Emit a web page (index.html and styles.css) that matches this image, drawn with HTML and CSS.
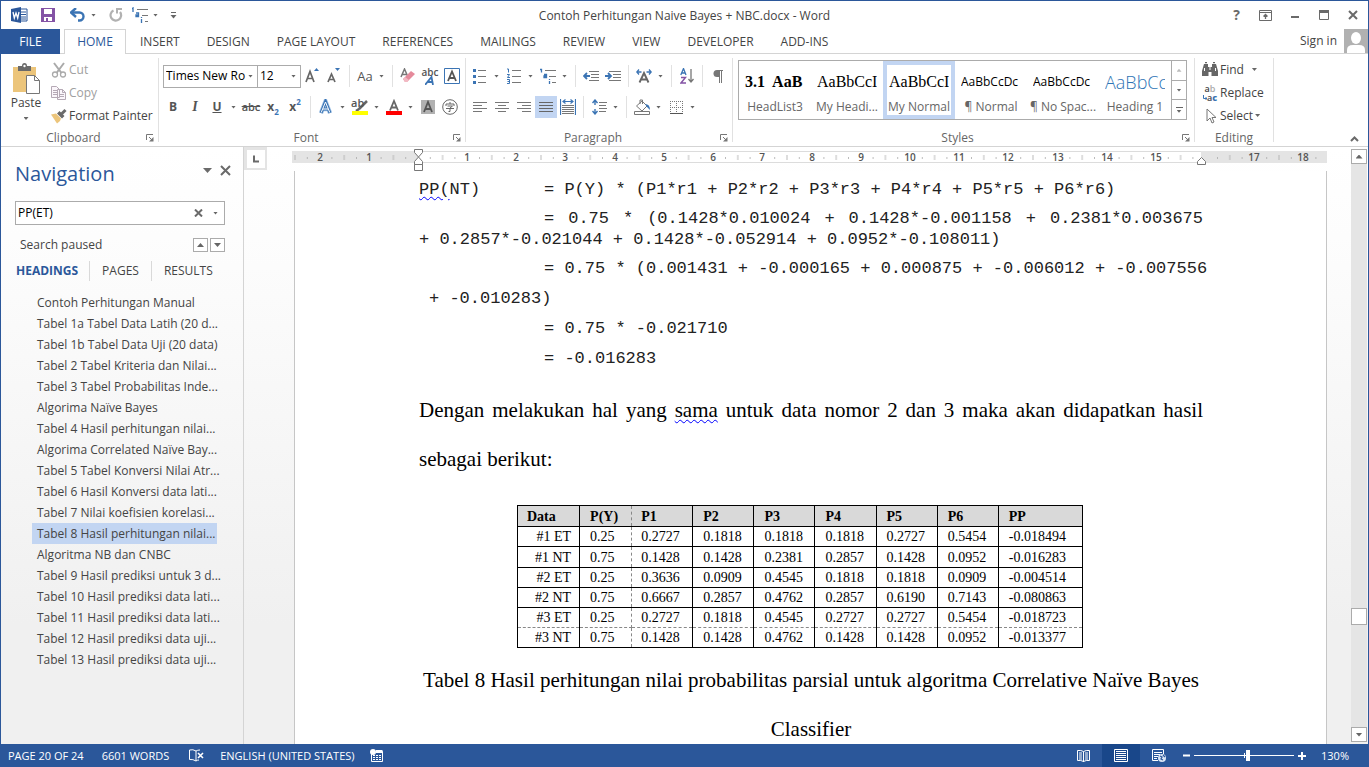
FILE: index.html
```html
<!DOCTYPE html>
<html lang="id">
<head>
<meta charset="utf-8">
<title>Contoh Perhitungan Naive Bayes + NBC.docx - Word</title>
<link rel="stylesheet" href="styles.css">
</head>
<body>
<div class="window">
  <header class="titlebar">
    <div class="quick">
      <svg class="app-logo" width="17" height="16" viewBox="0 0 17 16"><path d="M9 2h7v12H9z" fill="#fff" stroke="#2b579a"/><path d="M10 5h5M10 7.500h5M10 10h5M10 12h5" stroke="#2b579a"/><path d="M0 2L10 0v16L0 14z" fill="#2b579a"/><path d="M2 5l1.300 6L5 6l1.700 5L8 5" fill="none" stroke="#fff" stroke-width="1.300"/></svg>
      <button class="icon-btn" aria-label="Save"><svg width="14" height="14" viewBox="0 0 14 14"><path d="M0 0h14v14H0z" fill="#8453a5"/><path d="M3 1h8v5H3zM3 9h8v4H3z" fill="#fff"/><path d="M5 10h2v3H5z" fill="#8453a5"/></svg></button>
      <button class="icon-btn undo" aria-label="Undo"><svg width="16" height="14" viewBox="0 0 16 14"><path d="M2 4.500h7.500a4 4 0 0 1 0 8H8" fill="none" stroke="#3b74b4" stroke-width="2.400"/><path d="M6 0L1 4.500 6 9" fill="none" stroke="#3b74b4" stroke-width="2.400"/></svg><i class="arrow"></i></button>
      <button class="icon-btn" aria-label="Repeat"><svg width="14" height="14" viewBox="0 0 14 14"><path d="M4.500 2.500A5.300 5.300 0 1 0 11 4" fill="none" stroke="#b1b1b1" stroke-width="2.200"/><path d="M8 0v5.500M7 1h6" fill="none" stroke="#b1b1b1" stroke-width="2"/></svg></button>
      <button class="icon-btn list" aria-label="Multilevel list"><svg width="17" height="16" viewBox="0 0 17 16"><path d="M0 2l1-1v4M4 6h2.500v3.500H4V8h2M9.500 10v1M9.500 12v4" fill="none" stroke="#3b74b4" stroke-width="1.300"/><path d="M5 2.500h11M10 8.500h6M13 14.500h3" stroke="#777"/></svg><i class="arrow"></i></button>
      <button class="icon-btn more" aria-label="Customize toolbar"><svg width="7" height="7" viewBox="0 0 7 7"><path d="M1 0.500h5" stroke="#666"/><path d="M0.500 3h6l-3 3.500z" fill="#666"/></svg></button>
    </div>
    <div class="doc-name">Contoh Perhitungan Naive Bayes + NBC.docx - Word</div>
    <div class="win-btns">
      <button aria-label="Help" class="help">?</button>
      <button aria-label="Ribbon display options"><svg width="13" height="11" viewBox="0 0 13 11"><path d="M0.500 0.500h12v10H0.500zM0.500 2.500h12" fill="none" stroke="#6a6a6a"/><path d="M6.500 9V4.500M4.500 6.500l2-2 2 2" fill="none" stroke="#6a6a6a" stroke-width="1.300"/></svg></button>
      <button aria-label="Minimize"><svg width="10" height="10" viewBox="0 0 10 10"><path d="M1 7h8" stroke="#6a6a6a" stroke-width="2"/></svg></button>
      <button aria-label="Maximize"><svg width="10" height="10" viewBox="0 0 10 10"><path d="M0.500 1h9v8.500h-9z" fill="none" stroke="#6a6a6a"/><path d="M0 1.500h10" stroke="#6a6a6a" stroke-width="3"/></svg></button>
      <button aria-label="Close"><svg width="10" height="10" viewBox="0 0 10 10"><path d="M1 1l8 8M9 1L1 9" stroke="#6a6a6a" stroke-width="2"/></svg></button>
    </div>
  </header>

  <nav class="tabs" aria-label="Ribbon tabs">
    <button class="tab file">FILE</button>
    <button class="tab home">HOME</button>
    <button class="tab">INSERT</button>
    <button class="tab">DESIGN</button>
    <button class="tab">PAGE LAYOUT</button>
    <button class="tab">REFERENCES</button>
    <button class="tab">MAILINGS</button>
    <button class="tab">REVIEW</button>
    <button class="tab">VIEW</button>
    <button class="tab">DEVELOPER</button>
    <button class="tab">ADD-INS</button>
    <a class="signin" href="#">Sign in <svg width="24" height="24" viewBox="0 0 24 24"><path d="M0 0h24v24H0z" fill="#b1b1b1"/><ellipse cx="12" cy="9" rx="5" ry="6" fill="#fff"/><path d="M3 24v-3q0-5 6-5h6q6 0 6 5v3z" fill="#fff"/></svg></a>
  </nav>

  <section class="ribbon">
    <div class="group clipboard">
      <div class="group-body">
        <button class="paste"><svg width="29" height="31" viewBox="0 0 29 31"><path d="M1 4h23v25H1z" fill="#ecc57b"/><path d="M6 3h4q0-3 2.500-3T15 3h4v5H6z" fill="#6a6a6a"/><circle cx="12.500" cy="3" r="1.200" fill="#fff"/><path d="M14.500 12.500h8l5 5v13h-13z" fill="#fff" stroke="#777"/><path d="M22.500 12.500v5h5" fill="none" stroke="#777"/></svg><span>Paste</span><i class="arrow"></i></button>
        <div class="clip-list">
          <button class="line off"><svg width="16" height="16" viewBox="0 0 16 16"><path d="M3 1l7.500 10M13 1L5.500 11" stroke="#aaa" stroke-width="2"/><circle cx="4" cy="12.500" r="2.500" fill="none" stroke="#aaa" stroke-width="1.300"/><circle cx="12" cy="12.500" r="2.500" fill="none" stroke="#aaa" stroke-width="1.300"/></svg>Cut</button>
          <button class="line off"><svg width="16" height="16" viewBox="0 0 16 16"><path d="M0.500 1.500h5l3 3v8h-8zM6.500 4.500h5l3 3v7h-8z" fill="#fbf6fb" stroke="#b5a9b5"/><path d="M2 5.500h4M2 7.500h4M2 9.500h4M8 9.500h5M8 11.500h5M11.500 4.500v3h3" fill="none" stroke="#b5a9b5"/></svg>Copy</button>
          <button class="line"><svg width="16" height="16" viewBox="0 0 16 16"><path d="M0 6.500l5-1 5 5-1 2.500-3 2.500z" fill="#ecc57b"/><path d="M6 5.500l2.500-2.500 5 5-2.500 2.500zM8 3L6 1.500" fill="#6a6a6a"/><path d="M10.500 6l4-4" stroke="#6a6a6a" stroke-width="3"/></svg>Format Painter</button>
        </div>
      </div>
      <div class="group-name"><span>Clipboard</span><button class="launch" aria-label="Clipboard settings"><svg width="8" height="8" viewBox="0 0 8 8"><path d="M0.500 6V0.500H7M3 3l3 3" fill="none" stroke="#777"/><path d="M7.500 3v4.500H3z" fill="#777"/></svg></button></div>
    </div>

    <div class="group font">
      <div class="group-body rows">
        <div class="row">
          <label class="combo family"><select aria-label="Font"><option>Times New Ro</option></select></label>
          <label class="combo size"><select aria-label="Font size"><option>12</option></select></label>
          <button class="tool" aria-label="Grow font"><svg width="16" height="16" viewBox="0 0 16 16"><path d="M2 14L6 3.500 10 14M3.500 10.500h5" fill="none" stroke="#666" stroke-width="1.700"/><path d="M10 3l2.500-3L15 3z" fill="#3b74b4"/></svg></button>
          <button class="tool" aria-label="Shrink font"><svg width="16" height="16" viewBox="0 0 16 16"><path d="M2 14L5.500 6 9 14M3 11.500h5" fill="none" stroke="#666" stroke-width="1.700"/><path d="M9 0l2.500 3L14 0z" fill="#3b74b4"/></svg></button>
          <i class="sep"></i>
          <button class="tool case" aria-label="Change case">Aa</button><i class="arrow drop"></i>
          <i class="sep"></i>
          <button class="tool" aria-label="Clear formatting"><svg width="16" height="16" viewBox="0 0 16 16"><path d="M1 9L4.500 1 8 9M2.500 6.500h4" fill="none" stroke="#777" stroke-width="1.500"/><path d="M3 11l8-8 4 3-8 8H5z" fill="#e58a9b"/><path d="M3 11l2-2 4 3-2 2H5z" fill="#f2b9c3"/></svg></button>
          <button class="tool effects" aria-label="Phonetic guide"><span>abc</span><svg width="10" height="9" viewBox="0 0 10 9"><path d="M0 9L6.500 1 8 9M3 6h5" fill="none" stroke="#3b74b4" stroke-width="1.800"/></svg></button>
          <button class="tool" aria-label="Character border"><svg width="16" height="16" viewBox="0 0 16 16"><path d="M0.500 0.500h15v15H0.500z" fill="#fff" stroke="#3b74b4"/><path d="M4 13L8 3.500 12 13M5.500 10h5" fill="none" stroke="#555" stroke-width="1.800"/></svg></button>
        </div>
        <div class="row">
          <button class="tool b">B</button>
          <button class="tool i">I</button>
          <button class="tool u">U</button><i class="arrow drop"></i>
          <button class="tool strike">abc</button>
          <button class="tool b">x<sub>2</sub></button>
          <button class="tool b">x<sup>2</sup></button>
          <i class="sep"></i>
          <button class="tool" aria-label="Text effects"><svg width="16" height="16" viewBox="0 0 16 16"><path d="M3 14L7.500 2.500 12 14M4.500 10h6" fill="none" stroke="#a9c8e8" stroke-width="4.500"/><path d="M3 14L7.500 2.500 12 14M4.500 10h6" fill="none" stroke="#3b74b4" stroke-width="3"/><path d="M3.200 13.500L7.500 3l4.300 10.500M5 10h5" fill="none" stroke="#fff"/></svg></button><i class="arrow drop"></i>
          <button class="tool mark" aria-label="Highlight color"><span>ab</span><svg width="17" height="16" viewBox="0 0 17 16"><path d="M7 10l8-8M7 10l-3 2" stroke="#666" stroke-width="2.500"/><path d="M0 12h16v4H0z" fill="#ff0"/></svg></button><i class="arrow drop"></i>
          <button class="tool" aria-label="Font color"><svg width="16" height="16" viewBox="0 0 16 16"><path d="M4 11.500L8 2l4 9.500M5.500 8.500h5" fill="none" stroke="#666" stroke-width="1.800"/><path d="M0 12h16v4H0z" fill="red"/></svg></button><i class="arrow drop"></i>
          <button class="tool" aria-label="Character shading"><svg width="14" height="14" viewBox="0 0 14 14"><path d="M0 0h14v14H0z" fill="#b1b1b1"/><path d="M3 12L7 2l4 10M4.500 9h5" fill="none" stroke="#555" stroke-width="1.800"/></svg></button>
          <button class="tool" aria-label="Enclose characters"><svg width="16" height="16" viewBox="0 0 16 16"><circle cx="8" cy="8" r="7.300" fill="none" stroke="#666"/><path d="M8 3v2M4 7V5h8v2M5.500 7h5L8 9v3.500H6.500M4 9.500h8" fill="none" stroke="#666"/></svg></button>
        </div>
      </div>
      <div class="group-name"><span>Font</span><button class="launch" aria-label="Font settings"><svg width="8" height="8" viewBox="0 0 8 8"><path d="M0.500 6V0.500H7M3 3l3 3" fill="none" stroke="#777"/><path d="M7.500 3v4.500H3z" fill="#777"/></svg></button></div>
    </div>

    <div class="group paragraph">
      <div class="group-body rows">
        <div class="row">
          <button class="tool" aria-label="Bullets"><svg width="14" height="16" viewBox="0 0 14 16"><path d="M0 1h3v3H0zM0 7h3v3H0zM0 13h3v3H0z" fill="#3b74b4"/><path d="M5 2.500h8M5 8.500h8M5 14.500h8" stroke="#777"/></svg></button><i class="arrow drop"></i>
          <button class="tool" aria-label="Numbering"><svg width="14" height="16" viewBox="0 0 14 16"><path d="M0 1h1.500v3.500M0 6.500h2.500L0.500 9.500h2.500M0 11.500h2.500v4H0M0.500 13.500h2" fill="none" stroke="#3b74b4"/><path d="M5 2.500h9M5 8.500h9M5 14.500h9" stroke="#777"/></svg></button><i class="arrow drop"></i>
          <button class="tool" aria-label="Multilevel list"><svg width="17" height="16" viewBox="0 0 17 16"><path d="M0 1.500h1.500v3M4 6.500h2.500v3H4V8h2M9.500 11v1M9.500 13v3" fill="none" stroke="#3b74b4" stroke-width="1.300"/><path d="M5 2.500h11M9 8.500h7M12 14.500h4" stroke="#777"/></svg></button><i class="arrow drop"></i>
          <i class="sep"></i>
          <button class="tool" aria-label="Decrease indent"><svg width="16" height="12" viewBox="0 0 16 12"><path d="M6 1.500h10M8 4.500h8M8 7.500h8M6 10.500h10" stroke="#777"/><path d="M7 6H1M4 3L1 6l3 3" fill="none" stroke="#3b74b4" stroke-width="1.800"/></svg></button>
          <button class="tool" aria-label="Increase indent"><svg width="16" height="12" viewBox="0 0 16 12"><path d="M4 1.500h12M8 4.500h8M8 7.500h8M4 10.500h12" stroke="#777"/><path d="M0 6h6M3 3l3 3-3 3" fill="none" stroke="#3b74b4" stroke-width="1.800"/></svg></button>
          <i class="sep"></i>
          <button class="tool" aria-label="Asian layout"><svg width="16" height="14" viewBox="0 0 16 14"><path d="M3.500 13.500L8 4l4.500 9.500M5 10.500h6" fill="none" stroke="#666" stroke-width="1.900"/><path d="M5.500 3H1M3 0.500L0.800 3 3 5.500M10.500 3H15M13 0.500L15.200 3 13 5.500" fill="none" stroke="#3b74b4" stroke-width="1.300"/></svg></button><i class="arrow drop"></i>
          <i class="sep"></i>
          <button class="tool" aria-label="Sort"><svg width="14" height="16" viewBox="0 0 14 16"><path d="M0.800 7L3.500 0.500 6 7M1.500 5h4" fill="none" stroke="#3b74b4" stroke-width="1.300"/><path d="M1 9.500h4.500L1 15h5" fill="none" stroke="#8453a5" stroke-width="1.400"/><path d="M11 1v13M8.500 11l2.500 3 2.500-3" fill="none" stroke="#777" stroke-width="1.300"/></svg></button>
          <i class="sep"></i>
          <button class="tool" aria-label="Show marks"><svg width="11" height="13" viewBox="0 0 11 13"><path d="M5 0.500h5M6.500 1v12M8.500 1v12" stroke="#777"/><path d="M6.500 0H4a3.500 3.500 0 0 0 0 7h2.500z" fill="#777"/></svg></button>
        </div>
        <div class="row">
          <button class="tool" aria-label="Align left"><svg width="14" height="12" viewBox="0 0 14 12"><path d="M0 1.500h14M0 4.500h9M0 7.500h14M0 10.500h9" stroke="#777"/></svg></button>
          <button class="tool" aria-label="Center"><svg width="14" height="12" viewBox="0 0 14 12"><path d="M0 1.500h14M3 4.500h8M0 7.500h14M3 10.500h8" stroke="#777"/></svg></button>
          <button class="tool" aria-label="Align right"><svg width="14" height="12" viewBox="0 0 14 12"><path d="M0 1.500h14M5 4.500h9M0 7.500h14M5 10.500h9" stroke="#777"/></svg></button>
          <button class="tool on" aria-label="Justify"><svg width="14" height="12" viewBox="0 0 14 12"><path d="M0 1.500h14M0 4.500h14M0 7.500h14M0 10.500h14" stroke="#666"/></svg></button>
          <button class="tool" aria-label="Distribute"><svg width="16" height="16" viewBox="0 0 16 16"><path d="M0.500 0v16M15.500 0v16M3 2.500h10M5.500 0.500L3 2.500l2.500 2M10.500 0.500l2.500 2-2.500 2" fill="none" stroke="#3b74b4" stroke-width="1.200"/><path d="M2 6.500h12M2 8.500h12M2 10.500h12M2 12.500h12M2 14.500h12" stroke="#777"/></svg></button>
          <i class="sep"></i>
          <button class="tool" aria-label="Line spacing"><svg width="15" height="16" viewBox="0 0 15 16"><path d="M3 1v5M3 10v5M0.500 4L3 1l2.500 3M0.500 12L3 15l2.500-3" fill="none" stroke="#3b74b4" stroke-width="1.400"/><path d="M7 3.500h8M7 6.500h7M7 9.500h8M7 12.500h7" stroke="#777"/></svg></button><i class="arrow drop"></i>
          <i class="sep"></i>
          <button class="tool" aria-label="Shading"><svg width="17" height="16" viewBox="0 0 17 16"><path d="M2.500 7L8 2l5 5-5 5z" fill="#fff" stroke="#777"/><path d="M6 5V1h2.500v4" fill="none" stroke="#777"/><path d="M11 5q5 0 5 6l-3-3z" fill="#3b74b4"/><path d="M0.500 12.500h15v3H0.500z" fill="#fff" stroke="#777"/></svg></button><i class="arrow drop"></i>
          <button class="tool" aria-label="Borders"><svg width="13" height="13" viewBox="0 0 13 13"><path d="M0 0.500h13M0 6.500h13M0.500 0v13M6.500 0v13M12.500 0v13" fill="none" stroke="#777" stroke-dasharray="1 1"/><path d="M0 12.500h13" stroke="#555"/></svg></button><i class="arrow drop"></i>
        </div>
      </div>
      <div class="group-name"><span>Paragraph</span><button class="launch" aria-label="Paragraph settings"><svg width="8" height="8" viewBox="0 0 8 8"><path d="M0.500 6V0.500H7M3 3l3 3" fill="none" stroke="#777"/><path d="M7.500 3v4.500H3z" fill="#777"/></svg></button></div>
    </div>

    <div class="group styles">
      <div class="group-body">
        <div class="gallery">
          <button class="style"><b class="sample serif">3.1&nbsp; AaB</b><span>HeadList3</span></button>
          <button class="style"><span class="sample serif">AaBbCcI</span><span>My Headi...</span></button>
          <button class="style chosen"><span class="sample serif">AaBbCcI</span><span>My Normal</span></button>
          <button class="style"><span class="sample sans">AaBbCcDc</span><span>¶ Normal</span></button>
          <button class="style"><span class="sample sans">AaBbCcDc</span><span>¶ No Spac...</span></button>
          <button class="style"><span class="sample big">AaBbCc</span><span>Heading 1</span></button>
          <div class="gallery-nav">
            <button aria-label="Previous styles" disabled><i class="arrow up pale"></i></button>
            <button aria-label="Next styles"><i class="arrow"></i></button>
            <button aria-label="All styles" class="all"><i class="arrow"></i></button>
          </div>
        </div>
      </div>
      <div class="group-name"><span>Styles</span><button class="launch" aria-label="Styles settings"><svg width="8" height="8" viewBox="0 0 8 8"><path d="M0.500 6V0.500H7M3 3l3 3" fill="none" stroke="#777"/><path d="M7.500 3v4.500H3z" fill="#777"/></svg></button></div>
    </div>

    <div class="group editing">
      <div class="group-body">
        <button class="line"><svg width="16" height="16" viewBox="0 0 16 16"><path d="M2 2h4v3h4V2h4l2 7v5H9.500v-4h-3v4H0V9z" fill="#666"/><path d="M3 0.500h2M11 0.500h2" stroke="#666" stroke-width="1.500"/><path d="M2.500 6v3M13.500 6v3M8 5v3" stroke="#fff"/></svg><span class="find">Find</span><i class="arrow"></i></button>
        <button class="line"><span class="swap"><span>a<em>b</em></span><span class="to"><svg width="4" height="5" viewBox="0 0 4 5"><path d="M0.500 0v3.500H4M2.500 2L4 3.500 2.500 5" fill="none" stroke="#3b74b4"/></svg>a<b>c</b></span></span>Replace</button>
        <button class="line"><svg width="16" height="16" viewBox="0 0 16 16"><path d="M5 1v12l3-3 2 5 2-1-2-4.500h4z" fill="#fff" stroke="#777"/></svg><span>Select</span><i class="arrow"></i></button>
      </div>
      <div class="group-name"><span>Editing</span></div>
    </div>
    <button class="collapse" aria-label="Collapse ribbon"><svg width="9" height="6" viewBox="0 0 9 6"><path d="M1 5l3.500-3.500L8 5" fill="none" stroke="#6a6a6a" stroke-width="2"/></svg></button>
  </section>

  <main class="work">
    <aside class="navpane">
      <div class="nav-head"><h2>Navigation</h2>
        <button aria-label="Pane options"><svg width="10" height="5" viewBox="0 0 10 5"><path d="M0 0h9L4.500 5z" fill="#6a6a6a"/></svg></button>
        <button aria-label="Close pane"><svg width="11" height="11" viewBox="0 0 11 11"><path d="M1 1l9 9M10 1l-9 9" stroke="#6a6a6a" stroke-width="2"/></svg></button></div>
      <div class="search"><input type="text" value="PP(ET)" aria-label="Search document"><button aria-label="Clear search"><svg width="9" height="8" viewBox="0 0 9 8"><path d="M1 0.500l7 7M8 0.500l-7 7" stroke="#6a6a6a" stroke-width="2"/></svg></button><button aria-label="Search options"><i class="arrow"></i></button></div>
      <div class="status"><span>Search paused</span><button aria-label="Previous result"><i class="arrow up wide"></i></button><button aria-label="Next result"><i class="arrow wide"></i></button></div>
      <div class="views"><button class="current">HEADINGS</button><button>PAGES</button><button>RESULTS</button></div>
      <ul class="headings">
        <li><a href="#">Contoh Perhitungan Manual</a></li>
        <li><a href="#">Tabel 1a Tabel Data Latih (20 d...</a></li>
        <li><a href="#">Tabel 1b Tabel Data Uji (20 data)</a></li>
        <li><a href="#">Tabel 2 Tabel Kriteria dan Nilai...</a></li>
        <li><a href="#">Tabel 3 Tabel Probabilitas Inde...</a></li>
        <li><a href="#">Algorima Naïve Bayes</a></li>
        <li><a href="#">Tabel 4 Hasil perhitungan nilai...</a></li>
        <li><a href="#">Algorima Correlated Naïve Bay...</a></li>
        <li><a href="#">Tabel 5 Tabel Konversi Nilai Atr...</a></li>
        <li><a href="#">Tabel 6 Hasil Konversi data lati...</a></li>
        <li><a href="#">Tabel 7 Nilai koefisien korelasi...</a></li>
        <li><a href="#" class="active">Tabel 8 Hasil perhitungan nilai...</a></li>
        <li><a href="#">Algoritma NB dan CNBC</a></li>
        <li><a href="#">Tabel 9 Hasil prediksi untuk 3 d...</a></li>
        <li><a href="#">Tabel 10 Hasil prediksi data lati...</a></li>
        <li><a href="#">Tabel 11 Hasil prediksi data lati...</a></li>
        <li><a href="#">Tabel 12 Hasil prediksi data uji...</a></li>
        <li><a href="#">Tabel 13 Hasil prediksi data uji...</a></li>
      </ul>
    </aside>

    <section class="doc">
      <div class="ruler-row">
        <button class="tabstop" aria-label="Tab stop"><svg width="18" height="18" viewBox="0 0 18 18"><path d="M0 0h18v18H0z" fill="#fff"/><path d="M7 5.500v6h5" fill="none" stroke="#6a6a6a" stroke-width="2"/></svg></button>
        <svg class="ruler" width="1035" height="24" viewBox="0 0 1035 24">
          <defs><pattern id="ticks" x="126" y="0" width="49.200" height="24" patternUnits="userSpaceOnUse"><path d="M12.300 10v2M36.900 10v2M24.600 8v5" stroke="#aaa" stroke-width="0.800"/></pattern></defs>
          <path d="M0 4h1035v12H0z" fill="#e4e4e4"/><path d="M126 5h783v10H126z" fill="#fff"/><path d="M126 4.500h783M126 15.500h783" stroke="#dcdcdc"/>
          <path d="M0 0h1035v24H0z" fill="url(#ticks)"/>
          <g class="ruler-nums"><text x="28" y="14">2</text><text x="77" y="14">1</text><text x="175" y="14">1</text><text x="224" y="14">2</text><text x="273" y="14">3</text><text x="323" y="14">4</text><text x="372" y="14">5</text><text x="421" y="14">6</text><text x="470" y="14">7</text><text x="520" y="14">8</text><text x="569" y="14">9</text><text x="618" y="14">10</text><text x="667" y="14">11</text><text x="716" y="14">12</text><text x="766" y="14">13</text><text x="815" y="14">14</text><text x="864" y="14">15</text><text x="962" y="14">17</text><text x="1011" y="14">18</text></g>
          <path d="M122.500 2.500h8v3l-4 4.500-4-4.500zM122.500 17.500v-3l4-4.500 4 4.500v3zM122.500 17.500h8v6h-8zM905.500 17.500v-3l4-4 4 4v3z" fill="#fff" stroke="#777"/>
        </svg>
      </div>
      <article class="page">
        <div class="math">
          <p><span class="lead"><span class="spell">PP(</span>NT)</span><span>= P(Y) * (P1*r1 + P2*r2 + P3*r3 + P4*r4 + P5*r5 + P6*r6)</span></p>
          <p class="tight"><span class="lead"></span><span class="full">= 0.75 * (0.1428*0.010024 + 0.1428*-0.001158 + 0.2381*0.003675</span></p>
          <p class="short">+ 0.2857*-0.021044 + 0.1428*-0.052914 + 0.0952*-0.108011)</p>
          <p><span class="lead"></span><span>= 0.75 * (0.001431 + -0.000165 + 0.000875 + -0.006012 + -0.007556</span></p>
          <p class="hang">+ -0.010283)</p>
          <p><span class="lead"></span><span>= 0.75 * -0.021710</span></p>
          <p><span class="lead"></span><span>= -0.016283</span></p>
        </div>
        <p class="body"><span class="full">Dengan melakukan hal yang <span class="spell">sama</span> untuk data nomor 2 dan 3 maka akan didapatkan hasil</span> sebagai berikut:</p>
        <table class="results">
          <thead><tr><th>Data</th><th>P(Y)</th><th>P1</th><th>P2</th><th>P3</th><th>P4</th><th>P5</th><th>P6</th><th>PP</th></tr></thead>
          <tbody>
            <tr><td>#1 ET</td><td>0.25</td><td>0.2727</td><td>0.1818</td><td>0.1818</td><td>0.1818</td><td>0.2727</td><td>0.5454</td><td>-0.018494</td></tr>
            <tr><td>#1 NT</td><td>0.75</td><td>0.1428</td><td>0.1428</td><td>0.2381</td><td>0.2857</td><td>0.1428</td><td>0.0952</td><td>-0.016283</td></tr>
            <tr><td>#2 ET</td><td>0.25</td><td>0.3636</td><td>0.0909</td><td>0.4545</td><td>0.1818</td><td>0.1818</td><td>0.0909</td><td>-0.004514</td></tr>
            <tr><td>#2 NT</td><td>0.75</td><td>0.6667</td><td>0.2857</td><td>0.4762</td><td>0.2857</td><td>0.6190</td><td>0.7143</td><td>-0.080863</td></tr>
            <tr><td>#3 ET</td><td>0.25</td><td>0.2727</td><td>0.1818</td><td>0.4545</td><td>0.2727</td><td>0.2727</td><td>0.5454</td><td>-0.018723</td></tr>
            <tr><td>#3 NT</td><td>0.75</td><td>0.1428</td><td>0.1428</td><td>0.4762</td><td>0.1428</td><td>0.1428</td><td>0.0952</td><td>-0.013377</td></tr>
          </tbody>
        </table>
        <p class="caption">Tabel 8 Hasil perhitungan nilai probabilitas parsial untuk algoritma Correlative Naïve Bayes Classifier</p>
      </article>
    </section>

    <div class="scroll">
      <button aria-label="Scroll up"><i class="arrow up wide"></i></button>
      <div class="track"><div class="thumb"></div></div>
      <button aria-label="Scroll down"><i class="arrow wide"></i></button>
    </div>
  </main>

  <footer class="statusbar">
    <button class="pages">PAGE 20 OF 24</button>
    <button class="words">6601 WORDS</button>
    <button class="proof" aria-label="Proofing"><svg width="15" height="13" viewBox="0 0 15 13"><path d="M7 2q-3-2-6.500-1v9.500Q4 10 7 12q1-1 3-1M7 2v10M7 2q1.500-1 4-1" fill="none" stroke="#fff"/><path d="M9 4l5 5M14 4L9 9" stroke="#fff" stroke-width="1.600"/></svg></button>
    <button class="lang">ENGLISH (UNITED STATES)</button>
    <button aria-label="Macros"><svg width="13" height="13" viewBox="0 0 13 13"><path d="M1.500 5v7.500h11v-10H6" fill="none" stroke="#fff"/><circle cx="3" cy="3" r="3" fill="#fff"/><path d="M6 2.500h6.500" stroke="#fff" stroke-width="3"/><path d="M3 6.500h9M3 8.500h9M3 10.500h9" stroke="#fff" stroke-dasharray="2 1"/></svg></button>
    <div class="view-tools">
      <button aria-label="Read mode"><svg width="13" height="12" viewBox="0 0 13 12"><path d="M6.500 1.500Q4 0 0.500 0.500v10q3.500-.500 6 1 2.500-1.500 6-1v-10Q9 0 6.500 1.500zV12M2 3h3M2 5h3M2 7h3M2 9h3M8 3h3M8 5h3M8 7h3M8 9h3" fill="none" stroke="#fff"/></svg></button>
      <button aria-label="Print layout" class="pressed"><svg width="14" height="13" viewBox="0 0 14 13"><path d="M0.500 0.500h13v12H0.500zM2 2.500h10M2 4.500h10M2 6.500h10M2 8.500h10M2 10.500h10" fill="none" stroke="#fff"/></svg></button>
      <button aria-label="Web layout"><svg width="14" height="13" viewBox="0 0 14 13"><path d="M6 11.500H0.500V0.500h11V5M2 3.500h8M2 5.500h6M2 7.500h4M2 9.500h3" fill="none" stroke="#fff"/><circle cx="10" cy="9" r="4" fill="#dbe5f4"/><path d="M8 7l2 1-1 2 2 1M11 6l2 2" fill="none" stroke="#2b579a" stroke-width="1.300"/></svg></button>
      <button aria-label="Zoom out" class="step"><svg width="7" height="7" viewBox="0 0 7 7"><path d="M0 3.500h7" stroke="#fff" stroke-width="2"/></svg></button>
      <input type="range" min="0" max="100" value="54" aria-label="Zoom">
      <button aria-label="Zoom in" class="step"><svg width="8" height="8" viewBox="0 0 8 8"><path d="M0 4h8M4 0v8" stroke="#fff" stroke-width="2"/></svg></button>
      <button class="percent">130%</button>
    </div>
  </footer>
</div>
</body>
</html>
```

FILE: styles.css
```css
* { box-sizing: border-box; }
body { margin: 0; font: 12px/16px "Open Sans", "Noto Sans", sans-serif; color: #444; }
button { font: inherit; color: inherit; background: none; border: 0; padding: 0; margin: 0; }
a { color: inherit; text-decoration: none; }
p, h2, ul { margin: 0; padding: 0; }
svg { display: block; flex: none; }

.window { display: flex; flex-direction: column; height: 100vh; border: solid #2b579a; border-width: 1px 1px 0; background: #fff; overflow: hidden; }

.arrow { flex: none; width: 5px; height: 3px; background: #666; clip-path: polygon(0 0, 100% 0, 50% 100%); }
.arrow.up { clip-path: polygon(50% 0, 100% 100%, 0 100%); }
.arrow.wide { width: 7px; height: 4px; }
.arrow.pale { background: #bbb; }

.titlebar { flex: none; height: 28px; display: grid; grid-template-columns: 1fr auto 1fr; align-items: center; }
.quick { display: flex; align-items: center; padding-left: 10px; }
.quick .icon-btn { display: flex; align-items: center; gap: 4px; margin-left: 13px; }
.quick .undo { gap: 5px; margin-left: 15px; }
.quick .list { margin-left: 9px; }
.quick .more { margin-left: 12px; }
.doc-name { padding-top: 2px; white-space: nowrap; }
.win-btns { display: flex; justify-content: flex-end; padding-right: 1px; }
.win-btns button { width: 29px; height: 28px; display: grid; place-items: center; color: #6a6a6a; }
.win-btns .help { font-size: 14px; font-weight: 700; }

.tabs { flex: none; height: 25px; display: flex; gap: 1px; border-bottom: 1px solid #d4d4d4; white-space: nowrap; }
.tab { height: 24px; padding: 1px 13px 0; }
.tab.file { width: 59px; height: 25px; padding: 0; background: #2b579a; color: #fff; }
.tab.home { width: 62px; height: 25px; margin-left: 3px; padding: 0; border: 1px solid #d4d4d4; border-bottom: 0; background: #fff; color: #2b579a; }
.signin { margin-left: auto; display: flex; align-items: center; gap: 7px; }

.ribbon { flex: none; height: 93px; display: flex; border-bottom: 1px solid #d4d4d4; white-space: nowrap; }
.group { display: flex; flex-direction: column; margin-top: 4px; margin-bottom: 4px; border-right: 1px solid #e1e1e1; }
.clipboard { width: 158px; }
.font { width: 307px; }
.paragraph { width: 267px; }
.styles { width: 462px; }
.editing { width: 79px; }
.group-body { flex: 1; display: flex; min-height: 0; }
.group-name { height: 16px; margin-bottom: -4px; display: flex; align-items: center; color: #666; }
.group-name span { flex: 1; text-align: center; }
.launch { margin-right: 4px; }

.paste { width: 50px; display: flex; flex-direction: column; align-items: center; padding-top: 5px; gap: 1px; }
.paste .arrow { margin-top: 5px; }
.clip-list { display: flex; flex-direction: column; }
.line { height: 23px; display: flex; align-items: center; gap: 2px; }
.off { color: #a0a0a0; }

.rows { flex-direction: column; padding: 7px 0 0 3px; gap: 9px; }
.row { display: flex; align-items: center; height: 22px; }
.tool { flex: none; width: 22px; height: 22px; display: flex; align-items: center; justify-content: center; color: #555; }
.tool.on { background: #c2d5f2; }
.tool.b { font-weight: 700; }
.tool.i { font: italic 700 14px "Liberation Serif", serif; }
.tool.u { font-weight: 700; text-decoration: underline; }
.tool.strike { font-size: 11px; font-weight: 600; text-decoration: line-through; }
.tool sub, .tool sup { font-size: 8px; line-height: 8px; color: #3b74b4; }
.tool sub { align-self: flex-end; padding-bottom: 2px; }
.tool sup { align-self: flex-start; padding-top: 2px; }
.tool.case { font-size: 13px; }
.tool.effects { flex-direction: column; font-size: 10px; line-height: 8px; font-weight: 600; }
.mark { position: relative; }
.mark span { position: absolute; left: 2px; top: 1px; font-size: 11px; line-height: 12px; font-weight: 600; }
.drop { margin: 0 4px 0 3px; }
.sep { flex: none; width: 1px; height: 22px; margin: 0 4px; background: #e1e1e1; }
.combo { position: relative; display: flex; margin-left: -1px; }
.combo::after { content: ""; position: absolute; right: 5px; top: 10px; width: 5px; height: 3px; background: #666; clip-path: polygon(0 0, 100% 0, 50% 100%); }
.combo select { appearance: none; width: 100%; height: 23px; padding: 0 11px 0 2px; border: 1px solid #ababab; border-radius: 0; background: #fff; font: inherit; color: #000; }
.family { width: 95px; margin-left: 1px; }
.size { width: 44px; }

.styles .group-body { padding: 2px 7px 0 5px; }
.gallery { flex: 1; height: 60px; display: flex; border: 1px solid #ababab; }
.style { width: 72px; padding: 5px 2px 0; border: 4px solid transparent; display: flex; flex-direction: column; align-items: center; gap: 9px; color: #666; }
.chosen { border-color: #c2d5f2; }
.sample { flex: none; width: 60px; height: 20px; line-height: 24px; text-align: left; overflow: hidden; color: #000; }
.serif { font-family: "Liberation Serif", serif; font-size: 16px; }
.sans { font-family: "Open Sans", sans-serif; }
.big { font-size: 18px; font-weight: 300; color: #2e74b5; }
.gallery-nav { margin-left: auto; width: 15px; display: flex; flex-direction: column; border-left: 1px solid #ababab; }
.gallery-nav button { flex: 1; display: flex; flex-direction: column; align-items: center; justify-content: center; gap: 2px; }
.gallery-nav button + button { border-top: 1px solid #ababab; }
.gallery-nav .all::before { content: ""; width: 7px; height: 1px; background: #666; }

.editing .group-body { flex-direction: column; padding-left: 7px; }
.find { padding-right: 6px; }
.swap { width: 16px; font-size: 9px; line-height: 9px; font-weight: 600; display: flex; flex-direction: column; }
.swap em { font-style: normal; color: #aaa; }
.swap b { color: #3b74b4; }
.swap .to { display: flex; align-items: center; padding-left: 1px; }
.collapse { margin: auto 9px 0 auto; height: 14px; }

.work { flex: 1; display: flex; min-height: 0; background: linear-gradient(#fff, #fdfdfd 15%, #f0f0f0 80%); }
.navpane { flex: none; width: 243px; border-right: 1px solid #d4d4d4; padding: 12px 18px 0 14px; }
.nav-head { display: flex; align-items: center; gap: 7px; margin-right: -6px; height: 30px; }
.nav-head h2 { flex: 1; font-size: 20px; line-height: 28px; font-weight: 400; color: #2b579a; }
.nav-head button { height: 24px; display: flex; padding-top: 6px; }
.nav-head button:last-child { padding-top: 3px; }
.search { display: flex; align-items: center; height: 24px; margin-top: 12px; border: 1px solid #ababab; background: #fff; }
.search input { flex: 1; min-width: 0; border: 0; padding: 0 2px; font: inherit; color: #000; background: none; }
.search button { width: 17px; display: grid; place-items: center; }
.status { display: flex; align-items: center; height: 16px; margin-top: 12px; padding-left: 5px; gap: 2px; }
.status span { flex: 1; }
.status button { width: 15px; height: 14px; border: 1px solid #ababab; background: #fff; display: grid; place-items: center; }
.views { display: flex; margin-top: 8px; height: 20px; }
.views button { padding: 0 12px; border-left: 1px solid #d9d9d9; }
.views .current { padding: 0 11px 0 1px; border: 0; color: #2b579a; font-weight: 700; }
.headings { list-style: none; margin: 11px 8px 0 17px; white-space: nowrap; }
.headings a { display: block; height: 21px; line-height: 21px; padding-left: 5px; }
.headings .active { background: #c2d5f2; }

.doc { flex: 1; min-width: 0; display: flex; flex-direction: column; overflow: hidden; }
.ruler-row { flex: none; display: flex; height: 24px; }
.tabstop { width: 23px; height: 23px; margin-right: 25px; background: #e4e4e4; display: grid; place-items: center; }
.ruler-nums { font-size: 10px; fill: #555; text-anchor: middle; font-weight: 600; }
.page { flex: 1; min-height: 0; margin: 0 24px 0 50px; padding: 4px 123px 0 124px; border: solid #c6c6c6; border-width: 0 1px; background: #fff; color: #000; overflow: hidden; }
.math { font: 17px/30px "Liberation Mono", monospace; color: #222; white-space: nowrap; }
.math p { display: flex; }
.lead { flex: none; width: 125px; }
.full { flex: 1; display: block; white-space: normal; text-align: justify; text-align-last: justify; }
.math .tight { line-height: 27px; }
.math .short { line-height: 16px; padding-bottom: 6px; }
.math .hang { padding-left: 10px; }
.spell { text-decoration: underline wavy #00f 1px; text-underline-offset: 2px; }
.body, .caption { font: 21px/49px "Liberation Serif", serif; }
.body { margin-top: 12px; }
.caption { margin-top: 8px; text-align: center; }
.results { margin: 21px 0 0 98px; width: 566px; table-layout: fixed; border-collapse: collapse; font: 14px/18px "Liberation Serif", serif; }
.results th { padding: 2px 0 0 10px; border: 1px solid #000; background: #d9d9d9; text-align: left; width: 61px; }
.results th:nth-child(1) { width: 62px; padding-left: 9px; }
.results th:nth-child(2) { width: 52px; border-right: 1px dashed #888; }
.results th:nth-child(3) { border-left: 1px dashed #888; padding-left: 9px; }
.results th:last-child { width: 84px; }
.results td { padding: 1px 0 0 10px; border: 1px solid #000; }
.results td:first-child { padding: 1px 8px 0 0; text-align: right; }
.results td:nth-child(2) { border-right: 1px dashed #888; }
.results td:nth-child(3) { border-left: 1px dashed #888; padding-left: 9px; }
.results tbody tr:nth-child(5) td { border-bottom: 1px dashed #888; }
.results tbody tr:nth-child(6) td { border-top: 1px dashed #888; }
.results tbody tr:nth-child(2) td { padding-top: 2px; }

.scroll { flex: none; width: 16px; margin: 2px 1px 2px 0; display: flex; flex-direction: column; }
.scroll button { height: 15px; border: 1px solid #ababab; background: #fff; display: grid; place-items: center; }
.track { flex: 1; background: #e5e5e5; display: grid; grid-template-rows: 444fr 17px 102fr; }
.thumb { grid-row: 2; border: 1px solid #ababab; background: #fff; }

.statusbar { flex: none; height: 23px; margin: 0 -1px; display: flex; align-items: center; padding-left: 8px; background: #2b579a; color: #fff; font-size: 11px; white-space: nowrap; }
.pages { margin-right: 18px; }
.words { margin-right: 20px; }
.proof { margin-right: 16px; }
.lang { margin-right: 15px; }
.view-tools { margin-left: auto; height: 100%; display: flex; align-items: center; padding-right: 20px; }
.view-tools button { width: 38px; height: 100%; display: grid; place-items: center; }
.view-tools .pressed { background: #19478a; }
.view-tools .step { width: 16px; }
.view-tools .percent { width: 28px; margin-left: 11px; }
.view-tools input { appearance: none; width: 100px; height: 12px; margin: 0; background: linear-gradient(#fff, #fff) 50px center / 1px 5px no-repeat, linear-gradient(#fff, #fff) center / 100% 1px no-repeat; }
.view-tools input::-webkit-slider-thumb { appearance: none; width: 4px; height: 11px; background: #fff; }
```
